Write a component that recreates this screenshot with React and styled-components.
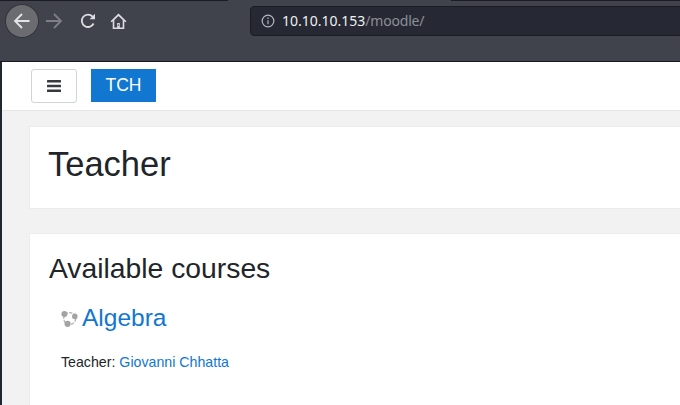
import React from "react";
import styled, { createGlobalStyle } from "styled-components";

const Global = createGlobalStyle`
  html, body {
    margin: 0;
    padding: 0;
    width: 680px;
    height: 405px;
    overflow: hidden;
    background: #f2f2f2;
    font-family: "Liberation Sans", Arial, sans-serif;
  }
  * { box-sizing: border-box; }
`;

const Frame = styled.div`
  display: flex;
  width: 680px;
  height: 405px;
  overflow: hidden;
`;

const Edge = styled.div`
  flex: 0 0 2px;
  background: #222633;
`;

const Window = styled.div`
  flex: 1;
  display: flex;
  flex-direction: column;
  min-width: 0;
`;

const Chrome = styled.div`
  flex: 0 0 62px;
  display: flex;
  flex-direction: column;
  margin-left: -2px;
  background: #40434c;
  border-bottom: 1px solid #15171c;
`;

const TabEdge = styled.div`
  flex: 0 0 2px;
  display: flex;
  justify-content: space-between;
`;

const TabLine = styled.div`
  height: 1px;
  width: ${(p) => p.$w}px;
  background: #1b1d22;
`;

const Toolbar = styled.div`
  display: flex;
  align-items: center;
  height: 38px;
  padding-left: 6px;
`;

const RoundButton = styled.div`
  flex: 0 0 32px;
  width: 32px;
  height: 32px;
  display: flex;
  align-items: center;
  justify-content: center;
  border-radius: 50%;
  background: ${(p) => (p.$active ? "#6b6c70" : "transparent")};
  box-shadow: ${(p) => (p.$active ? "0 0 0 1px #33353c" : "none")};
`;

const Address = styled.div`
  flex: 0 0 460px;
  display: flex;
  align-items: center;
  height: 30px;
  margin: -1px 0 0 116px;
  padding-left: 10px;
  background: #262933;
  border: 1px solid #1a1c22;
  border-radius: 4px 0 0 4px;
  font-family: "Noto Sans", sans-serif;
  font-size: 14px;
`;

const Host = styled.span`
  margin-left: 7px;
  color: #eef0f2;
`;

const Path = styled.span`
  color: #8b8f97;
  letter-spacing: -0.2px;
`;

const NavBar = styled.div`
  flex: 0 0 49px;
  display: flex;
  align-items: center;
  padding: 0 0 1px 29px;
  background: #fff;
  border-bottom: 1px solid #e5e5e5;
`;

const MenuButton = styled.div`
  width: 46px;
  height: 34px;
  display: flex;
  align-items: center;
  justify-content: center;
  background: #fff;
  border: 1px solid #ced4da;
  border-radius: 3px;
`;

const Brand = styled.div`
  width: 65px;
  height: 33px;
  margin-left: 14px;
  display: flex;
  align-items: center;
  justify-content: center;
  background: #1177d1;
  color: #fff;
  font-size: 17.5px;
`;

const Content = styled.div`
  flex: 1;
  display: flex;
  flex-direction: column;
  gap: 24px;
  padding: 15px 0 0 27px;
  width: 720px;
`;

const Card = styled.div`
  background: #fff;
  border: 1px solid #ececec;
  height: ${(p) => p.$h}px;
  padding: ${(p) => p.$pad};
`;

const PageTitle = styled.h1`
  margin: 0;
  font-size: 34.5px;
  line-height: 42px;
  font-weight: 400;
  color: #212529;
`;

const SectionTitle = styled.h2`
  margin: 0;
  font-size: 28.3px;
  line-height: 34px;
  font-weight: 400;
  color: #212529;
`;

const Course = styled.div`
  display: flex;
  align-items: center;
  margin: 17px 0 0 12px;
  height: 32px;
`;

const CourseLink = styled.a`
  margin-left: 4px;
  font-size: 24.5px;
  color: #1177d1;
`;

const TeacherRow = styled.div`
  margin: 18px 0 0 12px;
  font-size: 14.2px;
  line-height: 20px;
  color: #212529;
`;

const TeacherLink = styled.a`
  color: #1177d1;
`;

const ReloadSvg = styled.svg`
  margin-left: 3px;
`;

const HomeSvg = styled.svg`
  margin-left: 1px;
`;

function Back() {
  return (
    <svg width="18" height="18" viewBox="0 0 18 18" fill="none" stroke="#e4e4e6" strokeWidth="1.8">
      <path d="M16.5 9H2M9 2L2 9l7 7" />
    </svg>
  );
}

function Forward() {
  return (
    <svg width="18" height="18" viewBox="0 0 18 18" fill="none" stroke="#7d7f85" strokeWidth="1.8">
      <path d="M1 9h15M9 2l7 7-7 7" />
    </svg>
  );
}

function Reload() {
  return (
    <ReloadSvg width="16" height="16" viewBox="0 0 16 16" fill="none" stroke="#dcdde0" strokeWidth="1.8">
      <path d="M13.6 10.5A6.2 6.2 0 1 1 12.6 3.6L14.6 5.6" />
      <path d="M15 .8v5.4H9.6" fill="#dcdde0" stroke="none" />
    </ReloadSvg>
  );
}

function Home() {
  return (
    <HomeSvg width="17" height="17" viewBox="0 0 17 17">
      <path
        fill="#dcdde0"
        fillRule="evenodd"
        d="M8.5 0.6L0.6 8.2l1 1.1L2.7 8.3V16h11.6V8.3l1.1 1 1-1.1zM8.5 2.9l4.2 4v7.5h-2.9V10H7.2v4.4H4.3V6.9zM8 11.4h1v1.4H8z"
      />
    </HomeSvg>
  );
}

function Info() {
  return (
    <svg width="14" height="14" viewBox="0 0 14 14" fill="none" stroke="#b5b7bc" strokeWidth="1.2">
      <circle cx="7" cy="7" r="5.8" />
      <path d="M7 6.2v4M7 3.6v1.4" />
    </svg>
  );
}

function Bars() {
  return (
    <svg width="14" height="12" viewBox="0 0 14 12" fill="#343a40">
      <rect x="0" y="0" width="14" height="2.4" rx="0.5" />
      <rect x="0" y="4.8" width="14" height="2.4" rx="0.5" />
      <rect x="0" y="9.6" width="14" height="2.4" rx="0.5" />
    </svg>
  );
}

function CourseIcon() {
  return (
    <svg width="17" height="17" viewBox="0 0 16 16">
      <circle cx="8.2" cy="8" r="5.6" fill="none" stroke="#b0b0b0" strokeWidth="1.2" strokeDasharray="3 1.2" />
      <g fill="#a3a3a3">
        <circle cx="3.2" cy="3.8" r="2.8" />
        <circle cx="13" cy="6" r="2.6" />
        <circle cx="6.2" cy="13" r="2.9" />
      </g>
    </svg>
  );
}

export default function App() {
  return (
    <Frame>
      <Global />
      <Edge />
      <Window>
        <Chrome>
          <TabEdge>
            <TabLine $w={228} />
            <TabLine $w={229} />
          </TabEdge>
          <Toolbar>
            <RoundButton $active><Back /></RoundButton>
            <RoundButton><Forward /></RoundButton>
            <RoundButton><Reload /></RoundButton>
            <RoundButton><Home /></RoundButton>
            <Address>
              <Info />
              <Host>10.10.10.153</Host>
              <Path>/moodle/</Path>
            </Address>
          </Toolbar>
        </Chrome>
        <NavBar>
          <MenuButton><Bars /></MenuButton>
          <Brand>TCH</Brand>
        </NavBar>
        <Content>
          <Card $h={83} $pad="16px 18px">
            <PageTitle>Teacher</PageTitle>
          </Card>
          <Card $h={200} $pad="17px 19px">
            <SectionTitle>Available courses</SectionTitle>
            <Course>
              <CourseIcon />
              <CourseLink>Algebra</CourseLink>
            </Course>
            <TeacherRow>
              Teacher: <TeacherLink>Giovanni Chhatta</TeacherLink>
            </TeacherRow>
          </Card>
        </Content>
      </Window>
    </Frame>
  );
}
